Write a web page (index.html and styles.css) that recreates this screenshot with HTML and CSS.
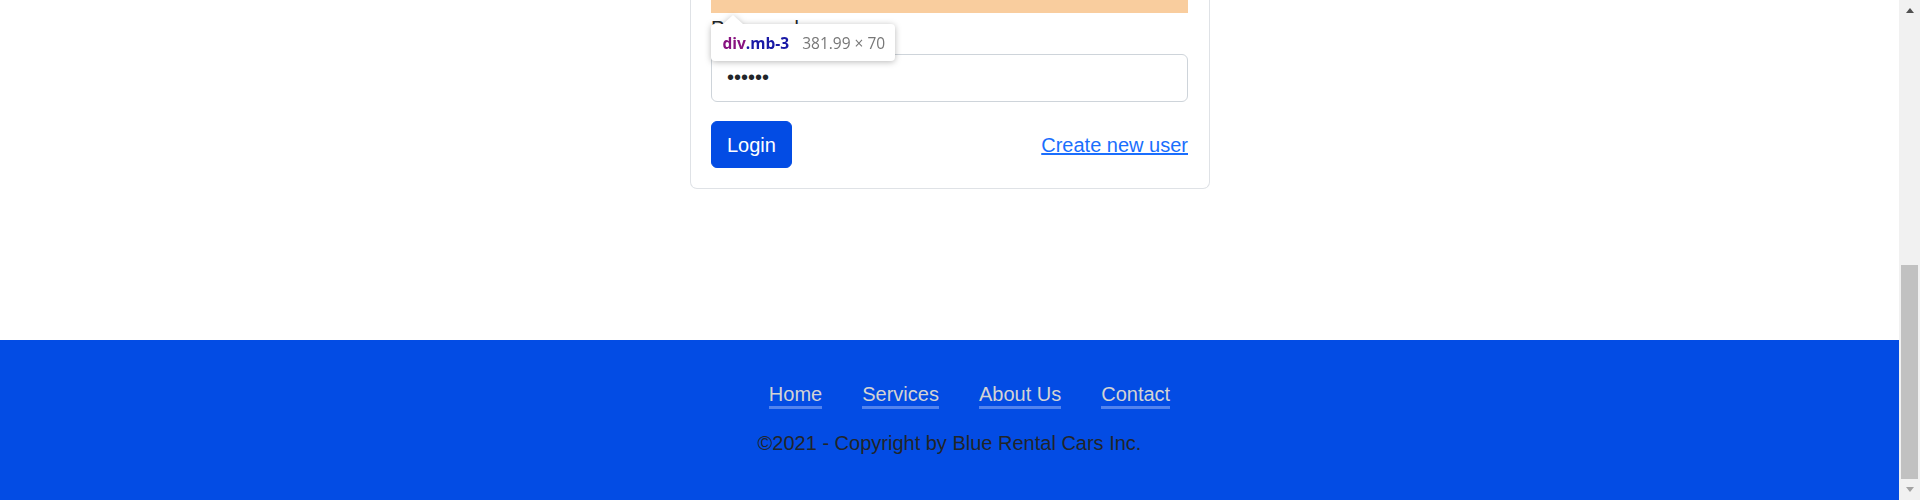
FILE: index.html
```html
<!DOCTYPE html>
<html lang="en">
<head>
<meta charset="utf-8">
<title>Login - Blue Rental Cars</title>
<link rel="stylesheet" href="styles.css">
</head>
<body>
<div class="window">
  <div class="page">
    <main class="content">
      <div class="card">
        <div class="card-body">
          <div class="margin-hl"></div>
          <div class="field">
            <label class="form-label" for="pw">Password</label>
            <input id="pw" class="form-control" type="password" value="secret">
          </div>
          <div class="actions">
            <button class="btn" type="button">Login</button>
            <a href="#" class="link">Create new user</a>
          </div>
          <div class="tooltip">
            <span class="tag">div</span><span class="cls">.mb-3</span>
            <span class="dims">381.99 × 70</span>
          </div>
        </div>
      </div>
    </main>
    <footer class="footer">
      <nav class="footer-nav">
        <a href="#">Home</a>
        <a href="#">Services</a>
        <a href="#">About Us</a>
        <a href="#">Contact</a>
      </nav>
      <p class="copy">©2021 - Copyright by Blue Rental Cars Inc.</p>
    </footer>
  </div>
  <div class="scrollbar">
    <div class="sb-btn"><span class="arrow-up"></span></div>
    <div class="sb-track"><div class="sb-thumb"></div></div>
    <div class="sb-btn"><span class="arrow-down"></span></div>
  </div>
</div>
</body>
</html>
```
FILE: styles.css
```css
* { box-sizing: border-box; }

html, body {
  margin: 0;
  padding: 0;
  height: 500px;
  overflow: hidden;
  background: #ffffff;
}

body {
  font-family: "Liberation Sans", Arial, sans-serif;
  font-size: 20px;
  color: #212529;
}

.window {
  display: flex;
  height: 500px;
}

.page {
  flex: 1;
  display: flex;
  flex-direction: column;
  min-width: 0;
}

.content {
  height: 340px;
  flex: none;
  display: flex;
  justify-content: center;
  align-items: flex-start;
}

.card {
  width: 520px;
  border: 1px solid #dfe2e6;
  border-top: none;
  border-radius: 0 0 7px 7px;
  background: #fff;
}

.card-body {
  position: relative;
  padding: 0 20.5px 20px 20.5px;
}

.margin-hl {
  height: 13.3px;
  background: #f9cd9e;
}

.field {
  display: flex;
  flex-direction: column;
  margin-bottom: 19.7px;
}

.form-label {
  display: block;
  font-size: 20px;
  line-height: 30px;
  margin-bottom: 11px;
  color: #212529;
}

.form-control {
  display: block;
  width: 100%;
  height: 47.3px;
  padding: 7.5px 15px;
  font-family: "Liberation Sans", Arial, sans-serif;
  font-size: 20px;
  color: #212529;
  border: 1px solid #ced4da;
  border-radius: 6px;
  background: #fff;
  outline: none;
}

.actions {
  display: flex;
  justify-content: space-between;
  align-items: center;
}

.btn {
  font-family: "Liberation Sans", Arial, sans-serif;
  font-size: 20px;
  line-height: 30px;
  color: #fff;
  background: #034ce4;
  border: 1px solid #034ce4;
  border-radius: 6px;
  padding: 7.5px 15px;
  height: 47px;
  cursor: pointer;
}

.link {
  color: #1a6efd;
  text-decoration: underline;
  font-size: 20px;
  line-height: 30px;
}

.tooltip {
  position: absolute;
  top: 24px;
  left: 20.5px;
  width: 184px;
  height: 37px;
  padding: 0 11.5px;
  display: flex;
  align-items: center;
  background: #fff;
  border-radius: 4px;
  font-family: "Open Sans", "Noto Sans", sans-serif;
  font-size: 15.5px;
  white-space: nowrap;
  filter: drop-shadow(0 1px 3px rgba(0, 0, 0, 0.28));
}

.tooltip::before {
  content: "";
  position: absolute;
  top: -9px;
  left: 12px;
  border-left: 10px solid transparent;
  border-right: 10px solid transparent;
  border-bottom: 9px solid #fff;
}

.tag {
  color: #881280;
  font-weight: 700;
}

.cls {
  color: #1a1aa6;
  font-weight: 700;
}

.dims {
  color: #777777;
  margin-left: 13px;
}

.footer {
  flex: 1;
  background: #034ce4;
  padding-top: 42.5px;
  display: flex;
  flex-direction: column;
  align-items: center;
}

.footer-nav {
  display: flex;
  gap: 40px;
  padding-left: 40px;
}

.footer-nav a {
  color: #d3d3d3;
  text-decoration: none;
  font-size: 20px;
  line-height: 23px;
  border-bottom: 3px solid #5283ee;
}

.copy {
  margin: 19.5px 0 0 0;
  font-size: 20px;
  line-height: 30px;
  color: #212529;
}

.scrollbar {
  width: 21px;
  flex: none;
  background: #f1f1f1;
  display: flex;
  flex-direction: column;
}

.sb-btn {
  height: 21px;
  display: flex;
  align-items: center;
  justify-content: center;
}

.arrow-up {
  width: 0;
  height: 0;
  border-left: 4.5px solid transparent;
  border-right: 4.5px solid transparent;
  border-bottom: 5px solid #505050;
}

.arrow-down {
  width: 0;
  height: 0;
  border-left: 4.5px solid transparent;
  border-right: 4.5px solid transparent;
  border-top: 5px solid #a3a3a3;
}

.sb-track {
  flex: 1;
  padding: 244px 2px 0 2px;
}

.sb-thumb {
  height: 214px;
  background: #c1c1c1;
}
```
